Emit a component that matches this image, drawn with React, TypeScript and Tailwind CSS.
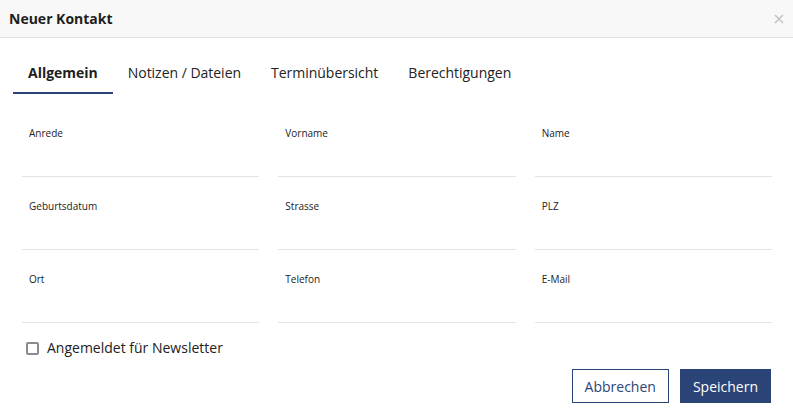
import { useState } from 'react'

const tabs = ['Allgemein', 'Notizen / Dateien', 'Terminübersicht', 'Berechtigungen']

const fields = ['Anrede', 'Vorname', 'Name', 'Geburtsdatum', 'Strasse', 'PLZ', 'Ort', 'Telefon', 'E-Mail']

export default function App() {
  const [active, setActive] = useState(0)
  const [newsletter, setNewsletter] = useState(false)

  return (
    <div className="h-[418px] w-[793px] bg-white text-[#222] font-['Open_Sans',sans-serif]">
      <header className="flex h-[38px] items-center justify-between border-b border-[#e3e3e3] bg-[#f8f8f8] pl-[9px] pr-[9px]">
        <h2 className="text-[14px] font-bold leading-5 text-[#1e1e1e]">Neuer Kontakt</h2>
        <button className="text-[#c4c4c4]" aria-label="Schließen">
          <svg width="10" height="10" viewBox="0 0 10 10" stroke="currentColor" strokeWidth="1.6">
            <path d="M1 1l8 8M9 1l-8 8" />
          </svg>
        </button>
      </header>

      <nav className="mt-4 flex pl-[13px]">
        {tabs.map((t, i) => (
          <button
            key={t}
            onClick={() => setActive(i)}
            className={
              'border-b-2 px-[15px] pt-[9px] pb-[9px] text-[14px] leading-5 tracking-[-0.02px] ' +
              (i === active ? 'border-[#2b4477] font-bold text-[#1e1e1e]' : 'border-transparent text-[#222]')
            }
          >
            {t}
          </button>
        ))}
      </nav>

      <div className="mt-[10px] grid grid-cols-3 gap-x-[19px] pl-[22px] pr-[21px]">
        {fields.map((f) => (
          <label key={f} className="block border-b border-[#e4e4e4] pt-[22px]">
            <span className="block pl-[7px] text-[10px] leading-[14px] text-[#222]">{f}</span>
            <input className="block h-[36px] w-full px-[7px] text-[13px] outline-none" />
          </label>
        ))}
      </div>

      <label className="mt-[15px] ml-[26px] flex w-fit items-center gap-[8px] text-[14px] leading-5">
        <input
          type="checkbox"
          checked={newsletter}
          onChange={(e) => setNewsletter(e.target.checked)}
          className="h-[13px] w-[13px] appearance-none rounded-[2px] border-2 border-[#8a8a94] bg-white checked:bg-[#2b4477]"
        />
        <span>Angemeldet für Newsletter</span>
      </label>

      <div className="mt-[11px] flex justify-end gap-[11px] pr-[22px]">
        <button className="h-[34px] border border-[#2b4477] bg-white px-[12px] text-[14px] text-[#2b4477]">
          Abbrechen
        </button>
        <button className="h-[34px] border border-[#2b4477] bg-[#2b4477] px-[12px] text-[14px] text-white">
          Speichern
        </button>
      </div>
    </div>
  )
}
